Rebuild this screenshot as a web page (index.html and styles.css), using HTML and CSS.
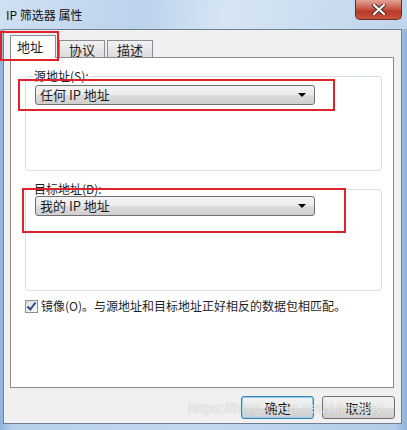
FILE: index.html
```html
<!DOCTYPE html>
<html lang="zh-CN">
<head>
    <meta charset="UTF-8">
    <title>IP 筛选器 属性</title>
    <link rel="stylesheet" href="styles.css">
</head>
<body>
    <div class="window">
        <div class="titlebar">
            <span class="title">IP 筛选器 属性</span>
            <button class="close">
                <svg width="14" height="11" viewBox="0 0 14 11">
                    <path d="M2 1 L12 10 M12 1 L2 10" stroke="#3a2a28" stroke-width="4" stroke-linecap="round"/>
                    <path d="M2 1 L12 10 M12 1 L2 10" stroke="#ffffff" stroke-width="2.2" stroke-linecap="round"/>
                </svg>
            </button>
        </div>

        <div class="client">
            <div class="tabs">
                <div class="tab active">地址</div>
                <div class="tab">协议</div>
                <div class="tab">描述</div>
            </div>

            <div class="panel">
                <fieldset class="group group-src">
                    <legend>源地址(S):</legend>
                    <div class="combo">
                        <span>任何 IP 地址</span>
                        <span class="arrow"></span>
                    </div>
                </fieldset>

                <fieldset class="group group-dst">
                    <legend>目标地址(D):</legend>
                    <div class="combo">
                        <span>我的 IP 地址</span>
                        <span class="arrow"></span>
                    </div>
                </fieldset>

                <label class="check">
                    <span class="box">
                        <svg width="11" height="11" viewBox="0 0 11 11">
                            <path d="M1.5 5.5 L4.3 8.5 L9.5 1.5" fill="none" stroke="#2b4a86" stroke-width="2"/>
                        </svg>
                    </span>
                    <span>镜像(O)。与源地址和目标地址正好相反的数据包相匹配。</span>
                </label>
            </div>

            <div class="actions">
                <button class="btn default">确定</button>
                <button class="btn">取消</button>
            </div>
        </div>
    </div>

    <!-- annotations drawn over the dialog -->
    <div class="mark mark-tab"></div>
    <div class="mark mark-src"></div>
    <div class="mark mark-dst"></div>
    <div class="watermark">https://blog.csdn.net/AiHeasy</div>
</body>
</html>
```

FILE: styles.css
```css
body {
    margin: 0;
    width: 407px;
    height: 430px;
    overflow: hidden;
    position: relative;
    font-family: "Noto Sans CJK SC", "DejaVu Sans", sans-serif;
    font-size: 12px;
    color: #1e1e1e;
    background: linear-gradient(90deg, #8fb3dc 0%, #b7d0ea 3%, #c3d8ee 50%, #b2cbe7 97%, #8fb3dc 100%);
}
.window {
    height: 430px;
    display: flex;
    flex-direction: column;
}
.titlebar {
    height: 29px;
    display: flex;
    align-items: flex-start;
    justify-content: space-between;
    background: linear-gradient(100deg, #cfe0f2 0%, #bcd3ec 35%, #d6e5f4 55%, #bfd5ec 100%);
}
.title {
    padding: 7px 0 0 6px;
    line-height: 16px;
    color: #111;
}
.close {
    width: 47px;
    height: 20px;
    margin-right: 5px;
    padding: 0;
    border: 1px solid #6e2b22;
    border-top: none;
    border-radius: 0 0 5px 5px;
    background: linear-gradient(#e3a496 0%, #cb6150 40%, #b83b27 60%, #c9533e 100%);
    display: flex;
    align-items: center;
    justify-content: center;
}

.client {
    height: 393px;
    margin: 0 5px 0 3px;
    border: 1px solid #6f7f92;
    background: #f0f0f0;
}
.tabs {
    display: flex;
    align-items: flex-end;
    padding: 4px 0 0 6px;
    height: 23px;
}
.tab {
    height: 16px;
    width: 44px;
    margin-right: 2px;
    border: 1px solid #898c95;
    border-bottom: none;
    background: linear-gradient(#f2f2f2, #dcdcdc);
    text-align: center;
    font-size: 13px;
    line-height: 17px;
}
.tab.active {
    height: 23px;
    width: 46px;
    background: #ffffff;
    position: relative;
    top: 1px;
    line-height: 22px;
    margin-right: 3px;
    text-align: left;
    padding-left: 6px;
    box-sizing: border-box;
}
.panel {
    width: 382px;
    height: 329px;
    margin-left: 6px;
    border: 1px solid #898c95;
    background: #ffffff;
}

.group {
    margin: 11px 0 0 14px;
    width: 357px;
    padding: 0 0 0 9px;
    border: 1px solid #d5dfe5;
    border-radius: 3px;
    box-sizing: border-box;
}
.group-src {
    height: 102px;
}
.group-dst {
    height: 109px;
    margin-top: 11px;
}
.group legend {
    padding: 0 1px;
    margin-left: -2px;
    line-height: 14px;
    color: #222;
}
.combo {
    width: 280px;
    height: 20px;
    margin-top: 2px;
    box-sizing: border-box;
    border: 1px solid #707070;
    border-radius: 3px;
    background: linear-gradient(#f4f4f4 0%, #ebebeb 50%, #dddddd 51%, #cfcfcf 100%);
    display: flex;
    align-items: center;
    justify-content: space-between;
    padding: 0 8px 0 4px;
    font-size: 13px;
    line-height: 18px;
    white-space: pre;
}
.group-dst .combo {
    margin-top: 0;
}
.arrow {
    width: 0;
    height: 0;
    border-left: 4px solid transparent;
    border-right: 4px solid transparent;
    border-top: 4px solid #000;
}

.check {
    display: flex;
    align-items: center;
    gap: 3px;
    margin: 7px 0 0 14px;
    font-size: 12px;
    line-height: 16px;
}
.check .box {
    width: 11px;
    height: 11px;
    border: 1px solid #8f8f8f;
    background: linear-gradient(135deg, #dcdcdc, #fafafa);
    display: flex;
}

.actions {
    display: flex;
    justify-content: flex-end;
    gap: 8px;
    padding: 8px 6px 0 0;
}
.btn {
    width: 73px;
    height: 23px;
    padding: 0;
    border: 1px solid #707070;
    border-radius: 3px;
    background: linear-gradient(#f2f2f2 0%, #ebebeb 50%, #dddddd 51%, #cfcfcf 100%);
    font: inherit;
    font-size: 13px;
    color: #111;
}
.btn.default {
    border-color: #3c7fb1;
    box-shadow: inset 0 0 0 1px #8ed1f5;
}

/* red annotation frames and the blog watermark */
.mark {
    position: absolute;
    border: 2px solid #e0232b;
    box-sizing: border-box;
}
.mark-tab {
    left: 0;
    top: 31px;
    width: 59px;
    height: 30px;
}
.mark-src {
    left: 18px;
    top: 79px;
    width: 317px;
    height: 32px;
}
.mark-dst {
    left: 22px;
    top: 188px;
    width: 324px;
    height: 45px;
}
.watermark {
    position: absolute;
    left: 188px;
    top: 399px;
    font-family: "Liberation Sans", sans-serif;
    font-size: 15px;
    color: rgba(255, 255, 255, 0.7);
    text-shadow: 0 0 1px rgba(120, 120, 120, 0.5);
}
```
